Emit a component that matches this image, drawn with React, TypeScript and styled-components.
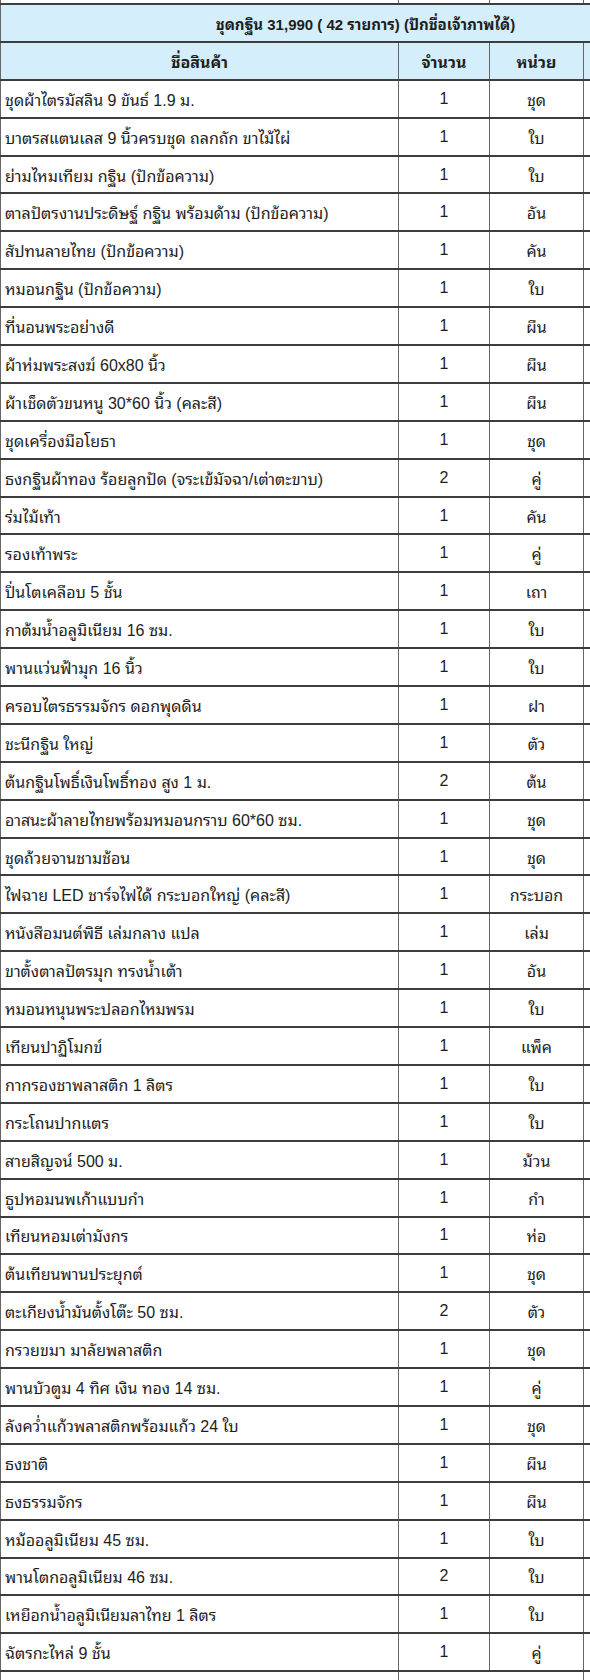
import React from 'react';
import styled, { createGlobalStyle } from 'styled-components';

const GlobalStyle = createGlobalStyle`
  html, body {
    margin: 0;
    padding: 0;
    background: #ffffff;
    overflow: hidden;
  }
  body {
    font-family: "Liberation Sans", "Noto Sans Thai Looped", "Noto Sans Thai", "Noto Sans", sans-serif;
    color: #1e1e1e;
  }
`;

const Page = styled.div`
  width: 590px;
  overflow: hidden;
`;

const Table = styled.table`
  width: 730px;
  border-collapse: collapse;
  table-layout: fixed;
  font-size: 16px;
`;

const TailRow = styled.tr`
  height: 4px;
`;

const Row = styled.tr`
  height: 37.9px;
`;

const Cell = styled.td<{ $align?: 'left' | 'center'; $head?: boolean; $size?: number }>`
  padding: 0 4px;
  border-top: 2px solid #3d3d3d;
  border-bottom: 2px solid #3d3d3d;
  border-left: 1px solid #666666;
  border-right: 1px solid #666666;
  text-align: ${({ $align }) => $align || 'left'};
  vertical-align: middle;
  background: ${({ $head }) => ($head ? '#d5eefb' : '#ffffff')};
  font-weight: ${({ $head }) => ($head ? 700 : 400)};
  font-size: ${({ $size }) => ($size ? `${$size}px` : 'inherit')};
  white-space: nowrap;
  overflow: hidden;
`;

const TailCell = styled.td`
  padding: 0;
  border-left: 1px solid #666666;
  border-right: 1px solid #666666;
  border-bottom: 2px solid #3d3d3d;
`;

const FirstCol = styled.col`
  width: 398px;
`;
const QtyCol = styled.col`
  width: 91px;
`;
const UnitCol = styled.col`
  width: 94px;
`;
const ExtraCol = styled.col`
  width: 147px;
`;

const items: [string, number, string][] = [
  ['ชุดผ้าไตรมัสลิน 9 ขันธ์ 1.9 ม.', 1, 'ชุด'],
  ['บาตรสแตนเลส 9 นิ้วครบชุด ถลกถัก ขาไม้ไผ่', 1, 'ใบ'],
  ['ย่ามไหมเทียม กฐิน (ปักข้อความ)', 1, 'ใบ'],
  ['ตาลปัตรงานประดิษฐ์ กฐิน พร้อมด้าม (ปักข้อความ)', 1, 'อัน'],
  ['สัปทนลายไทย (ปักข้อความ)', 1, 'คัน'],
  ['หมอนกฐิน (ปักข้อความ)', 1, 'ใบ'],
  ['ที่นอนพระอย่างดี', 1, 'ผืน'],
  ['ผ้าห่มพระสงฆ์ 60x80 นิ้ว', 1, 'ผืน'],
  ['ผ้าเช็ดตัวขนหนู 30*60 นิ้ว (คละสี)', 1, 'ผืน'],
  ['ชุดเครื่องมือโยธา', 1, 'ชุด'],
  ['ธงกฐินผ้าทอง ร้อยลูกปัด (จระเข้มัจฉา/เต่าตะขาบ)', 2, 'คู่'],
  ['ร่มไม้เท้า', 1, 'คัน'],
  ['รองเท้าพระ', 1, 'คู่'],
  ['ปิ่นโตเคลือบ 5 ชั้น', 1, 'เถา'],
  ['กาต้มน้ำอลูมิเนียม 16 ซม.', 1, 'ใบ'],
  ['พานแว่นฟ้ามุก 16 นิ้ว', 1, 'ใบ'],
  ['ครอบไตรธรรมจักร ดอกพุดดิน', 1, 'ฝา'],
  ['ชะนีกฐิน ใหญ่', 1, 'ตัว'],
  ['ต้นกฐินโพธิ์เงินโพธิ์ทอง สูง 1 ม.', 2, 'ต้น'],
  ['อาสนะผ้าลายไทยพร้อมหมอนกราบ 60*60 ซม.', 1, 'ชุด'],
  ['ชุดถ้วยจานชามช้อน', 1, 'ชุด'],
  ['ไฟฉาย LED ชาร์จไฟได้ กระบอกใหญ่ (คละสี)', 1, 'กระบอก'],
  ['หนังสือมนต์พิธี เล่มกลาง แปล', 1, 'เล่ม'],
  ['ขาตั้งตาลปัตรมุก ทรงน้ำเต้า', 1, 'อัน'],
  ['หมอนหนุนพระปลอกไหมพรม', 1, 'ใบ'],
  ['เทียนปาฏิโมกข์', 1, 'แพ็ค'],
  ['กากรองชาพลาสติก 1 ลิตร', 1, 'ใบ'],
  ['กระโถนปากแตร', 1, 'ใบ'],
  ['สายสิญจน์ 500 ม.', 1, 'ม้วน'],
  ['ธูปหอมนพเก้าแบบกำ', 1, 'กำ'],
  ['เทียนหอมเต่ามังกร', 1, 'ห่อ'],
  ['ต้นเทียนพานประยุกต์', 1, 'ชุด'],
  ['ตะเกียงน้ำมันตั้งโต๊ะ 50 ซม.', 2, 'ตัว'],
  ['กรวยขมา มาลัยพลาสติก', 1, 'ชุด'],
  ['พานบัวตูม 4 ทิศ เงิน ทอง 14 ซม.', 1, 'คู่'],
  ['ลังคว่ำแก้วพลาสติกพร้อมแก้ว 24 ใบ', 1, 'ชุด'],
  ['ธงชาติ', 1, 'ผืน'],
  ['ธงธรรมจักร', 1, 'ผืน'],
  ['หม้ออลูมิเนียม 45 ซม.', 1, 'ใบ'],
  ['พานโตกอลูมิเนียม 46 ซม.', 2, 'ใบ'],
  ['เหยือกน้ำอลูมิเนียมลาไทย 1 ลิตร', 1, 'ใบ'],
  ['ฉัตรกะไหล่ 9 ชั้น', 1, 'คู่'],
];

export default function App() {
  return (
    <Page>
      <GlobalStyle />
      <Table>
        <colgroup>
          <FirstCol />
          <QtyCol />
          <UnitCol />
          <ExtraCol />
        </colgroup>
        <tbody>
          <TailRow>
            <TailCell />
            <TailCell />
            <TailCell />
            <TailCell />
          </TailRow>
          <Row>
            <Cell $head $size={15} $align="center" colSpan={4}>
              ชุดกฐิน 31,990 ( 42 รายการ) (ปักชื่อเจ้าภาพได้)
            </Cell>
          </Row>
          <Row>
            <Cell $head $align="center">ชื่อสินค้า</Cell>
            <Cell $head $align="center">จำนวน</Cell>
            <Cell $head $align="center">หน่วย</Cell>
            <Cell $head $align="center"></Cell>
          </Row>
          {items.map(([name, qty, unit]) => (
            <Row key={name}>
              <Cell>{name}</Cell>
              <Cell $align="center">{qty}</Cell>
              <Cell $align="center">{unit}</Cell>
              <Cell></Cell>
            </Row>
          ))}
          <Row>
            <Cell></Cell>
            <Cell colSpan={2}></Cell>
            <Cell></Cell>
          </Row>
        </tbody>
      </Table>
    </Page>
  );
}
